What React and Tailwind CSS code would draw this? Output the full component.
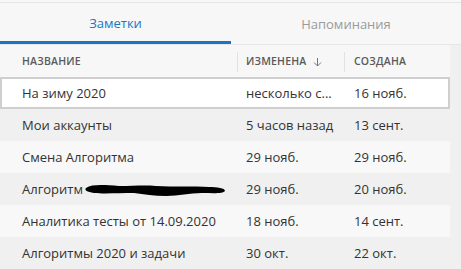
import React from 'react';

const rows = [
  { name: 'На зиму 2020', modified: 'несколько с...', created: '16 нояб.' },
  { name: 'Мои аккаунты', modified: '5 часов назад', created: '13 сент.' },
  { name: 'Смена Алгоритма', modified: '29 нояб.', created: '29 нояб.' },
  { name: 'Алгоритм', modified: '29 нояб.', created: '20 нояб.', redacted: true },
  { name: 'Аналитика тесты от 14.09.2020', modified: '18 нояб.', created: '14 сент.' },
  { name: 'Алгоритмы 2020 и задачи', modified: '30 окт.', created: '22 окт.' },
];

const Scribble = () => (
  <svg width="142" height="13" viewBox="0 0 142 13" className="ml-[1px] mt-[2px]">
    <path
      d="M2 4 C8 0 20 1 35 2 C50 2 60 1 72 2 C90 3 110 2 125 3 C133 3 141 4 141 7 C139 10 128 9 118 9 C105 9 95 12 82 12 C70 12 60 10 50 9 C35 9 20 10 10 9 C3 8 0 6 2 4 Z"
      fill="#000"
    />
  </svg>
);

export default function App() {
  return (
    <div
      className="w-[461px] h-[269px] overflow-hidden bg-[#f0f0f0] text-[#333]"
      style={{ fontFamily: '"Open Sans", "Noto Sans", sans-serif' }}
    >
      <div className="h-[3px] bg-[#f8f8f8] border-b border-[#e4e4e4]" />
      {/* Tabs */}
      <div className="flex h-[42px] bg-[#f7f7f7] border-b border-[#e6e6e6]">
        <div className="w-[231px] flex items-center justify-center text-[13px] text-[#1a75c4] border-b-[3px] border-[#1a75c4] pt-[4px]">
          Заметки
        </div>
        <div className="flex-1 flex items-center justify-center text-[13px] text-[#9b9b9b] pt-[2px]">
          Напоминания
        </div>
      </div>
      {/* Column headers */}
      <div className="flex h-[32px] w-[450px] items-center bg-[#f7f7f7] text-[10.5px] font-semibold text-[#5a5a5a] tracking-[0.2px] pt-[1px]">
        <div className="w-[237px] pl-[22px]">НАЗВАНИЕ</div>
        <div className="w-[107px] h-[20px] border-l border-[#e2e2e2] pl-[8px] flex items-center gap-[6px]">
          ИЗМЕНЕНА
          <svg width="9" height="10" viewBox="0 0 9 10" fill="none" stroke="#777" strokeWidth="1">
            <path d="M4.5 1v8M1 5.5l3.5 3.5 3.5-3.5" />
          </svg>
        </div>
        <div className="flex-1 h-[20px] border-l border-[#e2e2e2] pl-[9px] flex items-center">СОЗДАНА</div>
      </div>
      {/* Rows */}
      <div className="w-[450px] text-[13px]">
        {rows.map((r, i) => (
          <div
            key={i}
            className={`flex h-[32px] items-center pt-[1px] ${
              i === 0
                ? 'bg-white border-2 border-[#cfcfcf]'
                : i % 2 === 0
                ? 'bg-[#f8f8f8]'
                : 'bg-[#f0f0f0]'
            }`}
          >
            <div
              className={`flex items-center ${
                i === 0 ? 'w-[244px] pl-[20px]' : 'w-[246px] pl-[22px]'
              }`}
            >
              <span>{r.name}</span>
              {r.redacted && <Scribble />}
            </div>
            <div className="w-[108px] whitespace-nowrap">{r.modified}</div>
            <div className="flex-1 whitespace-nowrap">{r.created}</div>
          </div>
        ))}
      </div>
    </div>
  );
}
